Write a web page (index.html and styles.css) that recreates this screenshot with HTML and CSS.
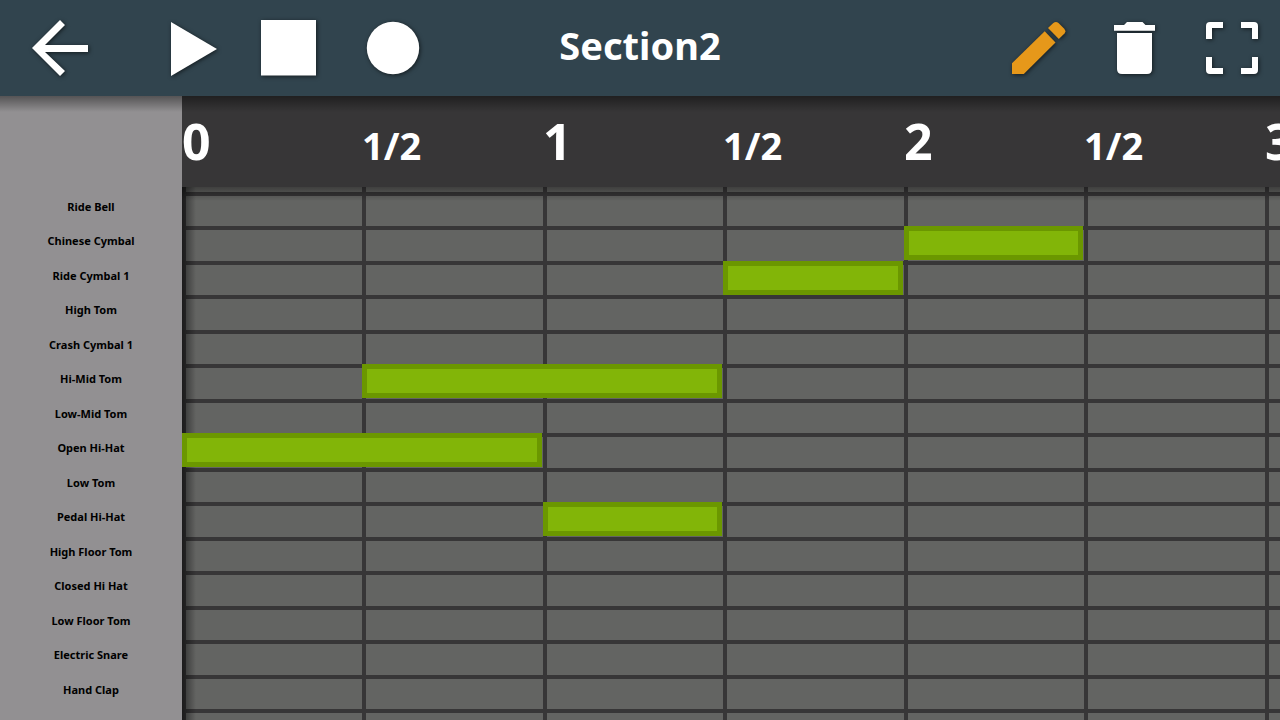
FILE: index.html
```html
<!DOCTYPE html>
<html lang="en">
<head>
<meta charset="utf-8">
<title>Section2</title>
<link rel="stylesheet" href="styles.css">
</head>
<body>
<header class="toolbar">
  <div class="tools">
    <button class="tool" aria-label="Back"><svg class="icon" width="141" height="96" viewBox="0 0 141 96"><path d="M32 48L60 20 65 25 45 45H88V52H45L65 71 60 76Z"/></svg></button>
    <button class="tool" aria-label="Play"><svg class="icon" width="100" height="96" viewBox="0 0 100 96"><path d="M30 22L76 49 30 76Z"/></svg></button>
    <button class="tool" aria-label="Stop"><svg class="icon" width="100" height="96" viewBox="0 0 100 96"><path d="M20 20H75V75.500H20Z"/></svg></button>
    <button class="tool" aria-label="Record"><svg class="icon" width="100" height="96" viewBox="0 0 100 96"><circle cx="52" cy="48" r="26.200"/></svg></button>
  </div>
  <h1 class="title">Section2</h1>
  <div class="tools tools-end">
    <button class="tool tool-active" aria-label="Edit"><svg class="icon" width="96" height="96" viewBox="0 0 96 96"><path d="M20 63.200V74H31.800L63.500 42.500 52.700 31.200Z"/><path d="M56 28L61.300 23Q64 21 66.500 23L72 28.500Q74.500 31 72.500 33.500L66.800 39Z"/></svg></button>
    <button class="tool" aria-label="Delete"><svg class="icon" width="96" height="96" viewBox="0 0 96 96"><path d="M26 25H36L39 22H54.500L57.500 25H67V30.700H26Z"/><path d="M29 33H64V69Q64 74 59 74H34Q29 74 29 69Z"/></svg></button>
    <button class="tool" aria-label="Full screen"><svg class="icon" width="96" height="96" viewBox="0 0 96 96"><path d="M22 39V26Q22 22 26 22H39V28H28V39ZM57 22H70Q74 22 74 26V39H68V28H57ZM74 57V70Q74 74 70 74H57V68H68V57ZM39 74H26Q22 74 22 70V57H28V68H39Z"/></svg></button>
  </div>
</header>
<main class="editor">
  <ul class="drums">
    <li class="drum">Ride Bell</li>
    <li class="drum">Chinese Cymbal</li>
    <li class="drum">Ride Cymbal 1</li>
    <li class="drum">High Tom</li>
    <li class="drum">Crash Cymbal 1</li>
    <li class="drum">Hi-Mid Tom</li>
    <li class="drum">Low-Mid Tom</li>
    <li class="drum">Open Hi-Hat</li>
    <li class="drum">Low Tom</li>
    <li class="drum">Pedal Hi-Hat</li>
    <li class="drum">High Floor Tom</li>
    <li class="drum">Closed Hi Hat</li>
    <li class="drum">Low Floor Tom</li>
    <li class="drum">Electric Snare</li>
    <li class="drum">Hand Clap</li>
  </ul>
  <section class="track">
    <div class="ruler">
      <span class="beat">0</span><span class="half">1/2</span>
      <span class="beat">1</span><span class="half">1/2</span>
      <span class="beat">2</span><span class="half">1/2</span>
      <span class="beat">3</span>
    </div>
    <div class="roll">
      <div class="notes">
        <div class="note lane-2 from-5 half-note"></div>
        <div class="note lane-3 from-4 half-note"></div>
        <div class="note lane-6 from-2 whole-note"></div>
        <div class="note lane-8 from-1 whole-note"></div>
        <div class="note lane-10 from-3 half-note"></div>
      </div>
    </div>
  </section>
</main>
</body>
</html>
```
FILE: styles.css
```css
* {
  box-sizing: border-box;
}

body {
  margin: 0;
  height: 100vh;
  display: flex;
  flex-direction: column;
  overflow: hidden;
  background: #929092;
  font-family: "Noto Sans", "Open Sans", sans-serif;
  font-weight: 700;
}

.toolbar {
  display: grid;
  grid-template-columns: 1fr auto 1fr;
  align-items: center;
  flex: none;
  background: #31444e;
  color: #fff;
}

.tools {
  display: flex;
}

.tools-end {
  justify-content: flex-end;
}

.tool {
  flex: none;
  margin: 0;
  padding: 0;
  border: 0;
  background: none;
  color: #fff;
  cursor: pointer;
}

.tool-active {
  color: #e6981a;
}

.icon {
  display: block;
  fill: currentColor;
  filter: drop-shadow(1px 1px 2px rgba(0, 0, 0, 0.6));
}

.title {
  margin: 0;
  padding-bottom: 6px;
  font-size: 38px;
  line-height: 52px;
}

.editor {
  position: relative;
  flex: 1;
  min-height: 0;
  display: grid;
  grid-template-columns: 182px 1fr;
}

/* shadow that the toolbar casts on the editor */
.editor::before {
  content: "";
  position: absolute;
  inset: 0 0 auto;
  height: 16px;
  background: linear-gradient(rgba(0, 0, 0, 0.42), rgba(0, 0, 0, 0));
}

.drums {
  margin: 0;
  padding: 94px 0 0;
  min-height: 0;
  overflow: hidden;
  list-style: none;
  background: #929092;
  color: #000;
  font-size: 11px;
  text-align: center;
}

.drum {
  height: 34px;
  line-height: 34px;
}

.drum:nth-child(even) {
  height: 35px;
}

.track {
  display: flex;
  flex-direction: column;
  min-width: 0;
  min-height: 0;
  overflow: hidden;
}

.ruler,
.notes {
  display: grid;
  grid-template-columns: repeat(4, 180px 181px);
}

.ruler {
  flex: none;
  align-items: baseline;
  padding-top: 4px;
  background: #373637;
  color: #fff;
  line-height: 83px;
}

.beat {
  font-size: 50px;
}

.half {
  font-size: 38px;
}

.roll {
  position: relative;
  flex: 1;
  min-height: 0;
  padding-top: 5px;
  background:
    linear-gradient(90deg, #373637 4px, transparent 4px 180px, #373637 180px 184px, transparent 184px) 0 0 / 361px 100%,
    linear-gradient(#373637 4px, transparent 4px 34px, #373637 34px 38px, transparent 38px) 0 5px / 100% 69px,
    #636462;
}

/* inner shadow along the top and left edges of the roll */
.roll::before {
  content: "";
  position: absolute;
  inset: 0;
  background:
    linear-gradient(rgba(0, 0, 0, 0.36), rgba(0, 0, 0, 0)) 0 0 / 100% 14px no-repeat,
    linear-gradient(90deg, rgba(0, 0, 0, 0.5), rgba(0, 0, 0, 0)) 0 0 / 14px 100% no-repeat;
}

.notes {
  position: relative;
  grid-template-rows: repeat(8, 34px 35px);
}

.note {
  height: 34px;
  margin-right: 1px;
  border: 5px solid #6b9700;
  background: #82b508;
}

.lane-2 { grid-row: 2; }
.lane-3 { grid-row: 3; }
.lane-6 { grid-row: 6; }
.lane-8 { grid-row: 8; }
.lane-10 { grid-row: 10; }

.from-1 { grid-column-start: 1; }
.from-2 { grid-column-start: 2; }
.from-3 { grid-column-start: 3; }
.from-4 { grid-column-start: 4; }
.from-5 { grid-column-start: 5; }

.half-note { grid-column-end: span 1; }
.whole-note { grid-column-end: span 2; }
```
